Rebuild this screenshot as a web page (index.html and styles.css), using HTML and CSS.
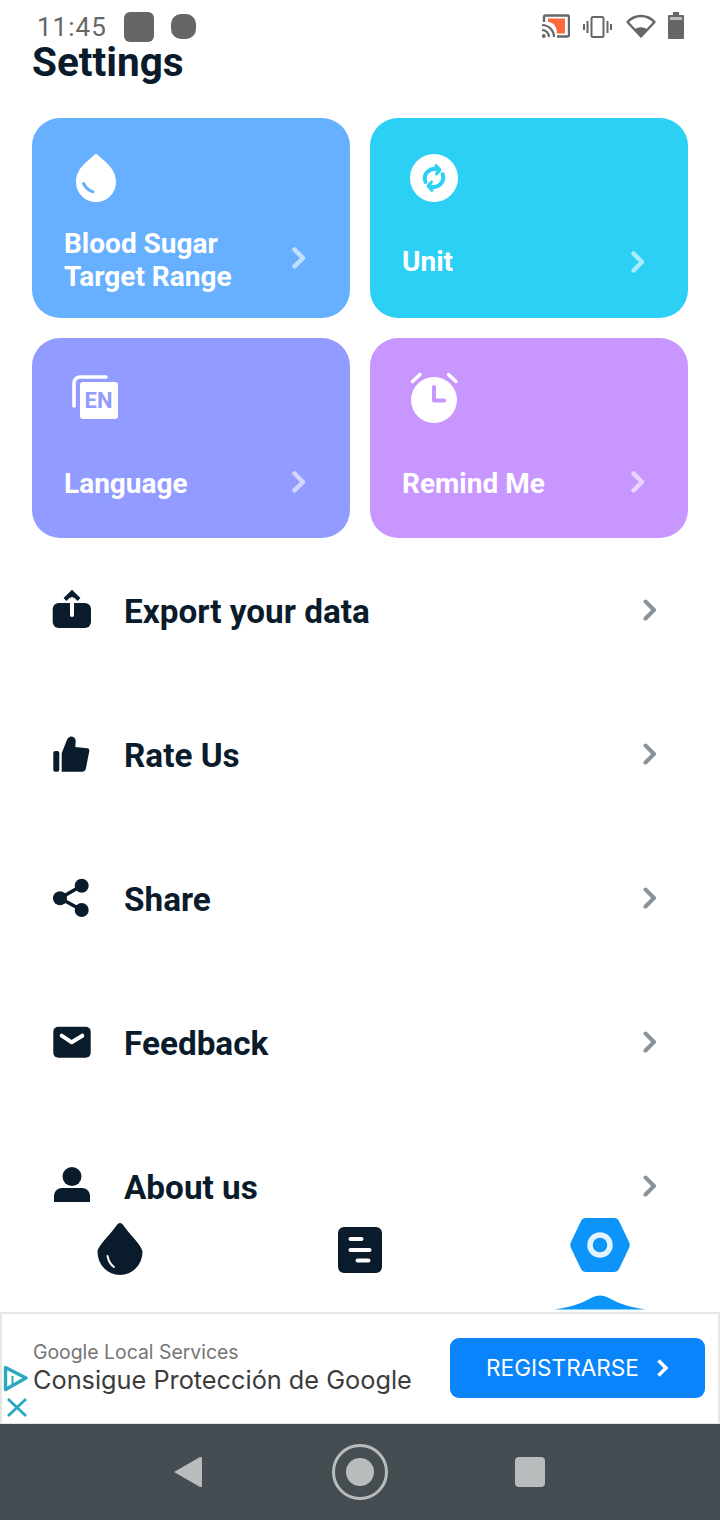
FILE: index.html
```html
<!DOCTYPE html>
<html lang="en">
<head>
<meta charset="utf-8">
<title>Settings</title>
<link rel="stylesheet" href="styles.css">
</head>
<body>
<div class="app">
  <header class="status">
    <span class="time">11:45</span>
    <span class="blob blob-square"></span>
    <span class="blob blob-round"></span>
    <span class="status-icons">
      <svg class="si si-cast" viewBox="0 0 28 24"><path d="M2 8V3a1.500 1.500 0 0 1 1.500-1.500h22a1.500 1.500 0 0 1 1.500 1.500v18a1.500 1.500 0 0 1-1.500 1.500H15" fill="none" stroke="#666" stroke-width="2.400"/><path d="M6 4.500h17v15H15C14.500 12 12 8.500 6 8z" fill="#ff6a3c"/><path d="M0 11a12 12 0 0 1 12 12M0 16a7 7 0 0 1 7 7" fill="none" stroke="#666" stroke-width="2.200"/><circle cx="1.800" cy="22" r="1.900" fill="#666"/></svg>
      <svg class="si si-vib" viewBox="0 0 29 22"><rect x="8.500" y="1" width="12" height="20" rx="1.500" fill="none" stroke="#666" stroke-width="2"/><path d="M4.500 5v12M24.500 5v12M1 8v6M28 8v6" stroke="#666" stroke-width="2"/></svg>
      <svg class="si si-wifi" viewBox="0 0 30 25"><path d="M15 23.500 1.500 9C9 1 21 1 28.500 9z" fill="none" stroke="#666" stroke-width="2.400" stroke-linejoin="round"/><path d="M15 24 8.500 16.500c4-3 9-3 13 0z" fill="#666"/></svg>
      <svg class="si si-bat" viewBox="0 0 16 27"><path d="M5 0h6v3h4a1 1 0 0 1 1 1v22a1 1 0 0 1-1 1H1a1 1 0 0 1-1-1V4a1 1 0 0 1 1-1h4z" fill="#666"/><rect x="2" y="5" width="12" height="3" fill="#bbb"/></svg>
    </span>
  </header>
  <h1 class="title">Settings</h1>

  <section class="grid">
    <a class="card card-blue">
      <svg class="card-icon" viewBox="0 0 48 48"><path d="M24 0c1 0 2 1 3 2 5 5 17 12 17 26a20 20 0 0 1-40 0C4 14 16 7 21 2c1-1 2-2 3-2z" fill="#fff"/><path d="M11.500 29.500c2 4 5 7 9.500 8.200" fill="none" stroke="#66b0ff" stroke-width="3" stroke-linecap="round"/></svg>
      <div class="card-row row-a"><span class="card-label">Blood Sugar<br>Target Range</span><svg class="card-chev" viewBox="0 0 14 22"><path d="M2.500 2.500 11 11l-8.500 8.500"/></svg></div>
    </a>
    <a class="card card-cyan">
      <svg class="card-icon" viewBox="0 0 48 48"><circle cx="24" cy="24" r="24" fill="#fff"/><path d="M15.500 28a9.500 9.500 0 0 1 13-12M32.500 20a9.500 9.500 0 0 1-13 12" fill="none" stroke="#2dd0f5" stroke-width="4" stroke-linecap="round"/><path d="M26 11.500l4 4.500-3.500 4M22 36.500l-4-4.500 3.500-4" fill="none" stroke="#2dd0f5" stroke-width="3" stroke-linecap="round" stroke-linejoin="round"/></svg>
      <div class="card-row row-b"><span class="card-label">Unit</span><svg class="card-chev" viewBox="0 0 14 22"><path d="M2.500 2.500 11 11l-8.500 8.500"/></svg></div>
    </a>
    <a class="card card-indigo">
      <svg class="card-icon" viewBox="0 0 48 48"><path d="M34 3H8a6 6 0 0 0-6 6v23" fill="none" stroke="#fff" stroke-width="3.600" stroke-linecap="round"/><rect x="8" y="8" width="38" height="37" rx="3" fill="#fff"/><text class="en" x="12.500" y="34">EN</text></svg>
      <div class="card-row row-c"><span class="card-label">Language</span><svg class="card-chev" viewBox="0 0 14 22"><path d="M2.500 2.500 11 11l-8.500 8.500"/></svg></div>
    </a>
    <a class="card card-purple">
      <svg class="card-icon" viewBox="0 0 48 48"><circle cx="24" cy="26" r="23" fill="#fff"/><path d="M2.500 7.500 10 .5M46 7.500 38.500.5" stroke="#fff" stroke-width="3.500" stroke-linecap="round"/><path d="M24 13v13.500h10" fill="none" stroke="#c797ff" stroke-width="4" stroke-linecap="round" stroke-linejoin="round"/></svg>
      <div class="card-row row-c"><span class="card-label">Remind Me</span><svg class="card-chev" viewBox="0 0 14 22"><path d="M2.500 2.500 11 11l-8.500 8.500"/></svg></div>
    </a>
  </section>

  <section class="list">
    <a class="item">
      <svg class="item-icon" viewBox="0 0 40 40"><rect x=".7" y="12" width="38.300" height="25" rx="6" fill="#0a1b2b"/><path d="M13 8.500 20 1.500l7 7M20 2v10" fill="none" stroke="#0a1b2b" stroke-width="4"/><path d="M20 8v16" stroke="#fff" stroke-width="4" stroke-linecap="round"/></svg>
      <span class="item-label">Export your data</span>
      <svg class="item-chev" viewBox="0 0 14 22"><path d="M2.500 2.500 11 11l-8.500 8.500"/></svg>
    </a>
    <a class="item">
      <svg class="item-icon" viewBox="0 0 40 40"><rect x="1.300" y="16" width="6" height="20.700" rx="2" fill="#0a1b2b"/><path d="M9.700 36.700V18.300L14.500 6C15.500 2.500 18 1 20 1.500c2.500.6 3.800 2.500 3.700 5L23.300 12l12 1.300c1.500.3 2.200 1.300 2 2.800L34 33c-.4 2.400-1.600 3.700-4 3.700z" fill="#0a1b2b"/></svg>
      <span class="item-label">Rate Us</span>
      <svg class="item-chev" viewBox="0 0 14 22"><path d="M2.500 2.500 11 11l-8.500 8.500"/></svg>
    </a>
    <a class="item">
      <svg class="item-icon" viewBox="0 0 40 40"><path d="M29.700 6.700 8 19.300 29.700 31" fill="none" stroke="#0a1b2b" stroke-width="3.600"/><circle cx="8" cy="19.300" r="7" fill="#0a1b2b"/><circle cx="29.700" cy="6.700" r="7" fill="#0a1b2b"/><circle cx="29.700" cy="31" r="7" fill="#0a1b2b"/></svg>
      <span class="item-label">Share</span>
      <svg class="item-chev" viewBox="0 0 14 22"><path d="M2.500 2.500 11 11l-8.500 8.500"/></svg>
    </a>
    <a class="item">
      <svg class="item-icon" viewBox="0 0 40 40"><rect x="1.300" y="3.700" width="37.400" height="31" rx="5" fill="#0a1b2b"/><path d="M9.700 12.700 19.700 19.300 30.300 12.700" fill="none" stroke="#fff" stroke-width="4" stroke-linecap="round" stroke-linejoin="round"/></svg>
      <span class="item-label">Feedback</span>
      <svg class="item-chev" viewBox="0 0 14 22"><path d="M2.500 2.500 11 11l-8.500 8.500"/></svg>
    </a>
    <a class="item">
      <svg class="item-icon" viewBox="0 0 40 40"><circle cx="20" cy="9.500" r="9.500" fill="#0a1b2b"/><path d="M2 36v-7a8 8 0 0 1 8-8h20a8 8 0 0 1 8 8v7z" fill="#0a1b2b"/></svg>
      <span class="item-label">About us</span>
      <svg class="item-chev" viewBox="0 0 14 22"><path d="M2.500 2.500 11 11l-8.500 8.500"/></svg>
    </a>
  </section>

  <nav class="tabs">
    <a class="tab"><svg class="tab-icon" viewBox="0 0 100 110"><path d="M50 21c1.500 0 2.500 1 3.500 2.500C60 33 72.500 44 72.500 50a22.500 23 0 0 1-45 0C27.500 44 40 33 46.500 23.500 47.500 22 48.500 21 50 21z" fill="#0a1b2b"/><path d="M37.500 54c1 5 3.500 9 6.500 11" fill="none" stroke="#fff" stroke-width="2" stroke-linecap="round"/></svg></a>
    <a class="tab"><svg class="tab-icon" viewBox="0 0 100 110"><rect x="28" y="25" width="44" height="46" rx="6" fill="#0a1b2b"/><path d="M40.500 37h11M40.500 48h19M47.500 58.500h11" stroke="#fff" stroke-width="4" stroke-linecap="round"/></svg></a>
    <a class="tab"><svg class="tab-icon" viewBox="0 0 100 110"><path d="M36 16h28c2.500 0 4 1 5 3l10 21c1 2 1 4 0 6L69 67c-1 2-2.500 3-5 3H36c-2.500 0-4-1-5-3L21 46c-1-2-1-4 0-6l10-21c1-2 2.500-3 5-3z" fill="#0d94f8"/><circle cx="50" cy="43" r="10" fill="none" stroke="#e3f2ff" stroke-width="5.500"/><path d="M4 107.500c14-2 26-5 36-11 7-4 13-4 20 0 10 6 22 9 36 11z" fill="#0d94f8"/></svg></a>
  </nav>

  <aside class="ad">
    <div class="ad-text">
      <span class="ad-sub">Google Local Services</span>
      <span class="ad-main">Consigue Protección de Google</span>
    </div>
    <a class="ad-btn"><span>REGISTRARSE</span><svg class="ad-chev" viewBox="0 0 13 20"><path d="M2.500 2.500 10 10l-7.500 7.500"/></svg></a>
    <svg class="ad-choice" viewBox="0 0 26 52"><path d="M2.500 2.500 23 13 2.500 24.500z" fill="none" stroke="#2aa8c0" stroke-width="3.400" stroke-linejoin="round"/><path d="M9.500 11v8" stroke="#2aa8c0" stroke-width="2"/><path d="M5 34 23 51M23 34 5 51" stroke="#2aa8c0" stroke-width="2.800"/></svg>
  </aside>

  <footer class="sysnav">
    <svg class="sys-back" viewBox="0 0 30 32"><path d="M0 16 26 1c1-.4 2 .2 2 1.300v27.400c0 1.100-1 1.700-2 1.300z" fill="#b9bcbd"/></svg>
    <svg class="sys-home" viewBox="0 0 56 56"><circle cx="28" cy="28" r="26.500" fill="none" stroke="#b9bcbd" stroke-width="3"/><circle cx="28" cy="28" r="14" fill="#b9bcbd"/></svg>
    <span class="sys-square"></span>
  </footer>
</div>
</body>
</html>
```
FILE: styles.css
```css
* { box-sizing: border-box; }
html, body { margin: 0; padding: 0; background: #fff; }
.app {
  width: 720px;
  height: 1520px;
  display: flex;
  flex-direction: column;
  overflow: hidden;
  font-family: Roboto, "Liberation Sans", sans-serif;
  color: #0a1b2b;
}
.status {
  height: 44px;
  flex: none;
  display: flex;
  align-items: flex-start;
  padding-left: 37px;
}
.time {
  font-size: 26px;
  line-height: 24px;
  margin-top: 15px;
  color: #666;
  letter-spacing: 1px;
  width: 87px;
}
.blob { background: #666; display: block; }
.blob-square { width: 30px; height: 30px; border-radius: 6px; margin-top: 12px; }
.blob-round { width: 25px; height: 25px; border-radius: 10px; margin: 14px 0 0 17px; }
.status-icons { margin-left: auto; display: flex; align-items: flex-start; margin-right: 36px; }
.si { display: block; flex: none; }
.si-cast { width: 28px; height: 24px; margin-top: 14px; }
.si-vib { width: 29px; height: 22px; margin: 16px 0 0 13px; }
.si-wifi { width: 30px; height: 25px; margin: 13px 0 0 14px; }
.si-bat { width: 16px; height: 27px; margin: 12px 0 0 12px; }
.title {
  margin: 0;
  padding-left: 32px;
  font-size: 40.500px;
  line-height: 36px;
  font-weight: 700;
  flex: none;
}
.grid {
  flex: none;
  margin-top: 38px;
  padding: 0 32px;
  display: grid;
  grid-template-columns: 318px 318px;
  grid-auto-rows: 200px;
  gap: 20px;
}
.card {
  border-radius: 28px;
  padding-top: 36px;
  color: #fff;
  display: flex;
  flex-direction: column;
}
.card-blue { background: #66b0ff; }
.card-cyan { background: #2dd0f5; }
.card-indigo { background: #929bff; }
.card-purple { background: #c797ff; }
.card-icon { width: 48px; height: 48px; margin-left: 40px; overflow: visible; display: block; flex: none; }
.card-row {
  height: 66px;
  display: flex;
  align-items: center;
  justify-content: space-between;
  padding: 0 44px 0 32px;
}
.row-a { margin-top: 25px; }
.row-b { margin-top: 26px; }
.row-c { margin-top: 28px; }
.card-cyan .card-row, .card-purple .card-row { padding-right: 43px; }
.card-label { font-size: 28px; line-height: 33px; font-weight: 700; }
.card-chev { width: 14px; height: 22px; display: block; flex: none; }
.card-chev path { fill: none; stroke: #fff; stroke-opacity: .6; stroke-width: 4.500; stroke-linecap: round; stroke-linejoin: round; }
.row-a .card-chev { margin-bottom: 4px; }
.row-b .card-chev { margin-top: 2px; }
.row-c .card-chev { margin-bottom: 2px; }
.list { flex: 1; min-height: 0; overflow: hidden; padding-top: 1px; }
.item {
  height: 144px;
  display: flex;
  align-items: center;
  padding: 0 63px 0 52px;
}
.item-icon { width: 40px; height: 40px; display: block; flex: none; overflow: visible; }
.item-label { font-size: 33.300px; line-height: 30px; font-weight: 700; margin: 2px 0 0 32px; flex: 1; }
.item-chev { width: 14px; height: 22px; display: block; flex: none; margin-bottom: 2px; }
.item-chev path { fill: none; stroke: #8a9299; stroke-width: 4; stroke-linecap: round; stroke-linejoin: round; }
.tabs { height: 110px; flex: none; display: flex; background: #fff; }
.tab { flex: 1; display: flex; justify-content: center; }
.tab-icon { width: 100px; height: 110px; display: block; }
.ad {
  height: 112px;
  flex: none;
  position: relative;
  display: flex;
  align-items: center;
  justify-content: space-between;
  border: 2px solid #e6e6e6;
  border-bottom-width: 1px;
  padding: 0 13px 2px 31px;
  background: #fff;
}
.ad-text { display: flex; flex-direction: column; margin-bottom: 4px; }
.ad-sub { font-family: Inter, sans-serif; font-size: 19.400px; line-height: 27px; color: #757575; }
.ad-main { font-family: Inter, sans-serif; font-size: 25.300px; line-height: 27px; color: #3c3c3c; }
.ad-btn {
  width: 255px;
  height: 60px;
  border-radius: 9px;
  background: #0a84fb;
  color: #fff;
  display: flex;
  align-items: center;
  justify-content: center;
  gap: 17px;
  font-family: Inter, sans-serif;
  font-size: 22.600px;
}
.ad-chev { width: 13px; height: 20px; display: block; }
.ad-chev path { fill: none; stroke: #fff; stroke-width: 3.500; }
.ad-choice { position: absolute; left: 1px; top: 51px; width: 26px; height: 52px; }
.en { font-family: Roboto, sans-serif; font-weight: 700; font-size: 22px; fill: #929bff; }
.sysnav {
  height: 96px;
  flex: none;
  background: #454c52;
  display: flex;
  align-items: center;
  justify-content: center;
  gap: 127.500px;
  padding-right: 1px;
}
.sys-back { width: 30px; height: 32px; display: block; }
.sys-home { width: 56px; height: 56px; display: block; }
.sys-square { width: 30px; height: 30px; border-radius: 4px; background: #b9bcbd; display: block; }
```
